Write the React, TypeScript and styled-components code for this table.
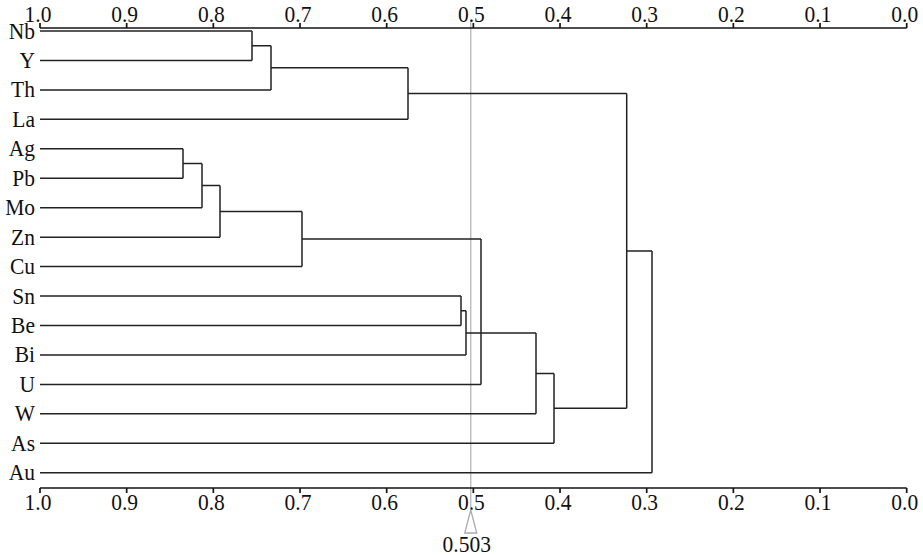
import React from "react";
import styled, { createGlobalStyle } from "styled-components";

const SERIF = `"Liberation Serif", "Times New Roman", Times, serif`;

const GlobalStyle = createGlobalStyle`
  html, body { margin: 0; padding: 0; background: #ffffff; }
  body { font-family: ${SERIF}; }
`;

const Page = styled.div`
  width: 923px;
  height: 555px;
  background: #ffffff;
  overflow: hidden;
`;

const Figure = styled.svg`
  display: block;
  width: 923px;
  height: 555px;
  font-family: ${SERIF};
`;

const Branch = styled.path`
  fill: none;
  stroke: #222222;
  stroke-width: 1.5;
`;

const AxisLine = styled.path`
  fill: none;
  stroke: #151515;
  stroke-width: 1.7;
`;

const CutLine = styled.line`
  stroke: #bcbcbc;
  stroke-width: 1.4;
`;

const Marker = styled.polygon`
  fill: #ffffff;
  stroke: #acacac;
  stroke-width: 1.3;
`;

const LabelText = styled.text<{ $anchor?: string }>`
  font-family: ${SERIF};
  font-size: 21.5px;
  fill: #111111;
  text-anchor: ${(p) => p.$anchor ?? "middle"};
`;

function Label({
  x,
  y,
  anchor,
  children,
}: {
  x: number;
  y: number;
  anchor?: string;
  children: React.ReactNode;
}) {
  return (
    <LabelText $anchor={anchor} transform={`translate(${x} ${y}) scale(1 1.1)`}>
      {children}
    </LabelText>
  );
}

const X0 = 40;
const SPAN = 866.7;
const xOf = (v: number) => X0 + (1 - v) * SPAN;
const rowY = (i: number) => 31 + 29.45 * i;

const leaves: { name: string; end: number }[] = [
  { name: "Nb", end: 252 },
  { name: "Y", end: 252 },
  { name: "Th", end: 271 },
  { name: "La", end: 408 },
  { name: "Ag", end: 183 },
  { name: "Pb", end: 183 },
  { name: "Mo", end: 202 },
  { name: "Zn", end: 220 },
  { name: "Cu", end: 302 },
  { name: "Sn", end: 461 },
  { name: "Be", end: 461 },
  { name: "Bi", end: 466 },
  { name: "U", end: 481 },
  { name: "W", end: 536 },
  { name: "As", end: 554 },
  { name: "Au", end: 652 },
];

function buildBranches(): string {
  const y = rowY;
  const d: string[] = [];
  const v = (x: number, a: number, b: number) => d.push(`M${x},${a}V${b}`);
  const h = (a: number, b: number, yy: number) => d.push(`M${a},${yy}H${b}`);

  leaves.forEach((l, i) => h(X0, l.end, y(i)));

  v(252, y(0), y(1));
  const m01 = (y(0) + y(1)) / 2;
  h(252, 271, m01);
  v(271, m01, y(2));
  const m012 = (m01 + y(2)) / 2;
  h(271, 408, m012);
  v(408, m012, y(3));
  const mTop = (m012 + y(3)) / 2;
  h(408, 626.7, mTop);

  v(183, y(4), y(5));
  const a1 = (y(4) + y(5)) / 2;
  h(183, 202, a1);
  v(202, a1, y(6));
  const a2 = (a1 + y(6)) / 2;
  h(202, 220, a2);
  v(220, a2, y(7));
  const a3 = (a2 + y(7)) / 2;
  h(220, 302, a3);
  v(302, a3, y(8));
  const a4 = (a3 + y(8)) / 2;
  h(302, 481, a4);
  v(481, a4, y(12));

  v(461, y(9), y(10));
  const s1 = (y(9) + y(10)) / 2;
  h(461, 466, s1);
  v(466, s1, y(11));
  const s2 = 333;
  h(466, 536, s2);
  v(536, s2, y(13));
  const s3 = (s2 + y(13)) / 2;
  h(536, 554, s3);
  v(554, s3, y(14));
  const s4 = (s3 + y(14)) / 2;
  h(554, 626.7, s4);

  v(626.7, mTop, s4);
  const r1 = (mTop + s4) / 2;
  h(626.7, 652, r1);
  v(652, r1, y(15));

  return d.join("");
}

const ticks = [1.0, 0.9, 0.8, 0.7, 0.6, 0.5, 0.4, 0.3, 0.2, 0.1, 0.0];
const TOP_AXIS = 28;
const BOTTOM_AXIS = 488;

function axisPath(yy: number, dir: number): string {
  let d = `M${X0},${yy}H${xOf(0)}`;
  ticks.forEach((t) => {
    const x = xOf(t);
    d += `M${x},${yy}V${yy + dir * 5}`;
  });
  return d;
}

export default function App() {
  const cutX = xOf(0.503);
  return (
    <Page>
      <GlobalStyle />
      <Figure viewBox="0 0 923 555">
        <CutLine x1={cutX} y1={20} x2={cutX} y2={510} />
        <AxisLine d={axisPath(TOP_AXIS, -1)} />
        <AxisLine d={axisPath(BOTTOM_AXIS, 1)} />
        {ticks.map((t) => (
          <Label key={`t${t}`} x={xOf(t) - 2} y={22}>
            {t.toFixed(1)}
          </Label>
        ))}
        {ticks.map((t) => (
          <Label key={`b${t}`} x={xOf(t) - 2} y={510}>
            {t.toFixed(1)}
          </Label>
        ))}
        <Branch d={buildBranches()} />
        {leaves.map((l, i) => (
          <Label key={l.name} x={35} y={rowY(i) + 7.5} anchor="end">
            {l.name}
          </Label>
        ))}
        <Marker points={`${cutX},510 ${cutX - 6},533 ${cutX + 6},533`} />
        <Label x={cutX - 4} y={552}>
          0.503
        </Label>
      </Figure>
    </Page>
  );
}
